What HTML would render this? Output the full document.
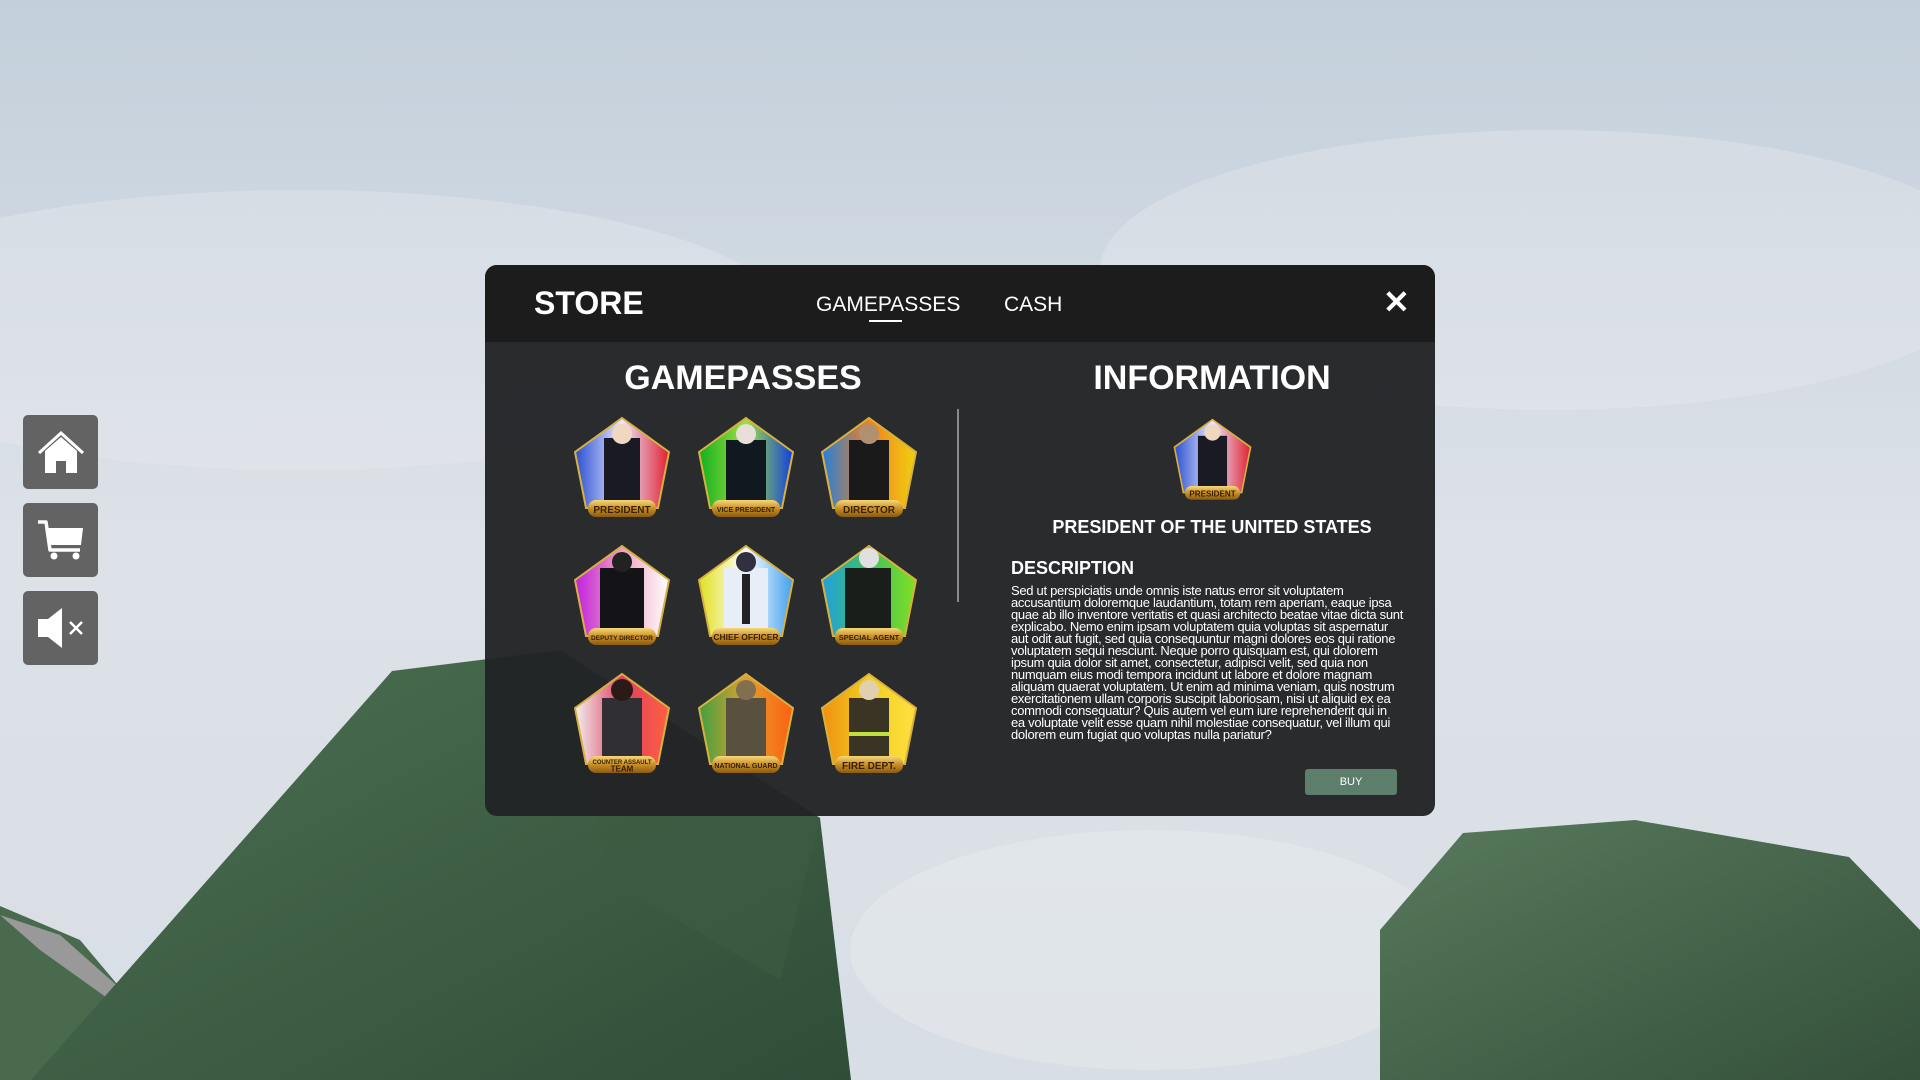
<!DOCTYPE html>
<html><head><meta charset="utf-8"><style>
*{margin:0;padding:0;box-sizing:border-box}
body{width:1920px;height:1080px;overflow:hidden;font-family:"Liberation Sans",sans-serif;position:relative;background:#c9d3dc}
#bg{position:absolute;left:0;top:0}
.side{position:absolute;left:23px;width:75px;height:74px;background:#636363;border-radius:5px;display:flex;align-items:center;justify-content:center}
.panel{position:absolute;left:485px;top:265px;width:950px;height:551px;border-radius:12px;overflow:hidden;background:rgba(34,35,37,.96)}
.hdr{height:77px;background:#1c1c1c;position:relative;color:#fff}
.abs{position:absolute;color:#fff;white-space:nowrap}
.desc{position:absolute;left:1011px;top:585px;width:392px;color:#fff;font-size:13px;line-height:12px;letter-spacing:-.3px}
</style></head><body>
<svg id="bg" width="1920" height="1080">
<defs>
<linearGradient id="sky" x1="0" y1="0" x2="0" y2="1"><stop offset="0" stop-color="#c3cfdb"/><stop offset=".5" stop-color="#dde2e8"/><stop offset="1" stop-color="#d8dee5"/></linearGradient>
<linearGradient id="g1" x1="0" y1="0" x2="1" y2="1"><stop offset="0" stop-color="#4d7152"/><stop offset="1" stop-color="#2f4d38"/></linearGradient>
<linearGradient id="g2" x1="0" y1="0" x2="1" y2="1"><stop offset="0" stop-color="#587a5c"/><stop offset="1" stop-color="#34503b"/></linearGradient>
</defs>
<rect width="1920" height="1080" fill="url(#sky)"/>
<ellipse cx="300" cy="330" rx="500" ry="140" fill="#eef0f2" opacity=".3"/>
<ellipse cx="1550" cy="270" rx="450" ry="140" fill="#eef0f2" opacity=".3"/>
<ellipse cx="1150" cy="950" rx="300" ry="120" fill="#eef0f2" opacity=".35"/>
<polygon points="0,906 80,940 122,990 98,1080 0,1080" fill="#4a6a4e"/>
<polygon points="0,915 60,935 122,990 110,1000 40,950" fill="#999"/>
<polygon points="31,1080 392,671 560,650 820,818 851,1080" fill="url(#g1)"/>
<polygon points="560,650 820,818 780,980 610,880" fill="#3c5c42" opacity=".6"/>
<polygon points="1380,1080 1380,930 1463,833 1635,820 1849,857 1920,930 1920,1080" fill="url(#g2)"/>
</svg>

<div class="side" style="top:415px"><svg width="50" height="46" viewBox="0 0 50 46"><path d="M3 24 L25 4 L47 24" fill="none" stroke="#fff" stroke-width="3"/><path d="M9 22 L25 8 L41 22 V44 H30 V32 H20 V44 H9Z" fill="#fff"/></svg></div>
<div class="side" style="top:503px"><svg width="50" height="44" viewBox="0 0 50 44"><path d="M2 4 H10 L14 32 H44" fill="none" stroke="#fff" stroke-width="3.5" stroke-linejoin="round"/><path d="M11 10 H47 L45 27 H14Z" fill="#fff"/><circle cx="18" cy="38" r="3.5" fill="#fff"/><circle cx="40" cy="38" r="3.5" fill="#fff"/></svg></div>
<div class="side" style="top:591px"><svg width="54" height="46" viewBox="0 0 54 46"><path d="M4 14 H14 L28 3 V43 L14 32 H4Z" fill="#fff"/><path d="M36 17 L48 29 M48 17 L36 29" stroke="#fff" stroke-width="2.5"/></svg></div>

<div class="panel"><div class="hdr">
<div class="abs" style="left:49px;top:20px;font-size:32px;font-weight:bold">STORE</div>
<div class="abs" style="left:331px;top:28px;font-size:21px">GAMEPASSES</div>
<div style="position:absolute;left:384px;top:55px;width:33px;height:2px;background:#fff"></div>
<div class="abs" style="left:519px;top:28px;font-size:21px">CASH</div>
<div class="abs" style="left:898px;top:18px;font-size:32px;font-weight:bold">✕</div>
</div></div>

<div class="abs" style="left:743px;top:359px;transform:translateX(-50%);font-size:34px;font-weight:bold">GAMEPASSES</div>
<div class="abs" style="left:1212px;top:359px;transform:translateX(-50%);font-size:34px;font-weight:bold">INFORMATION</div>
<div style="position:absolute;left:957px;top:409px;width:2px;height:193px;background:#8a8a8a"></div>

<svg width="1920" height="1080" style="position:absolute;left:0;top:0">
<defs>
<linearGradient id="b1" x1="0" x2="1"><stop offset="0" stop-color="#2a4fd0"/><stop offset=".5" stop-color="#e8e8ff"/><stop offset="1" stop-color="#e02030"/></linearGradient>
<linearGradient id="b2" x1="0" x2="1"><stop offset="0" stop-color="#10b020"/><stop offset=".5" stop-color="#a0e040"/><stop offset="1" stop-color="#1040e0"/></linearGradient>
<linearGradient id="b3" x1="0" x2="1"><stop offset="0" stop-color="#2080e0"/><stop offset=".5" stop-color="#f08020"/><stop offset="1" stop-color="#f0d010"/></linearGradient>
<linearGradient id="b4" x1="0" x2="1"><stop offset="0" stop-color="#c020e0"/><stop offset=".5" stop-color="#f0a0c0"/><stop offset="1" stop-color="#ffffff"/></linearGradient>
<linearGradient id="b5" x1="0" x2="1"><stop offset="0" stop-color="#e0e020"/><stop offset=".5" stop-color="#ffffff"/><stop offset="1" stop-color="#40a0f0"/></linearGradient>
<linearGradient id="b6" x1="0" x2="1"><stop offset="0" stop-color="#20a0e0"/><stop offset=".5" stop-color="#40c060"/><stop offset="1" stop-color="#80e020"/></linearGradient>
<linearGradient id="b7" x1="0" x2="1"><stop offset="0" stop-color="#f0f0f0"/><stop offset=".5" stop-color="#e04060"/><stop offset="1" stop-color="#ff6040"/></linearGradient>
<linearGradient id="b8" x1="0" x2="1"><stop offset="0" stop-color="#40a040"/><stop offset=".5" stop-color="#e0a030"/><stop offset="1" stop-color="#ff6010"/></linearGradient>
<linearGradient id="b9" x1="0" x2="1"><stop offset="0" stop-color="#f09010"/><stop offset=".5" stop-color="#f0d020"/><stop offset="1" stop-color="#ffe040"/></linearGradient>
<linearGradient id="gold" x1="0" y1="0" x2="0" y2="1"><stop offset="0" stop-color="#f8d878"/><stop offset=".5" stop-color="#c89028"/><stop offset="1" stop-color="#8a5a10"/></linearGradient>
<g id="pent"><path d="M50 2 L97 36 L86 92 L14 92 L3 36Z" stroke="#d8b040" stroke-width="2"/></g>
</defs>
<g font-family="Liberation Sans" font-weight="bold" text-anchor="middle">
<g transform="translate(572,416)"><use href="#pent" fill="url(#b1)"/><rect x="32" y="22" width="36" height="72" fill="#1a1a24"/><circle cx="50" cy="18" r="10" fill="#f0d8c0"/><rect x="16" y="84" width="68" height="17" rx="8" fill="url(#gold)"/><text x="50" y="97" font-size="10" fill="#3a2000">PRESIDENT</text></g>
<g transform="translate(696,416)"><use href="#pent" fill="url(#b2)"/><rect x="30" y="24" width="40" height="70" fill="#101820"/><circle cx="50" cy="18" r="10" fill="#e8e0d8"/><rect x="16" y="84" width="68" height="17" rx="8" fill="url(#gold)"/><text x="50" y="96" font-size="7" fill="#3a2000">VICE PRESIDENT</text></g>
<g transform="translate(819,416)"><use href="#pent" fill="url(#b3)"/><rect x="30" y="24" width="40" height="70" fill="#1a1a1a"/><circle cx="50" cy="18" r="10" fill="#b09070"/><rect x="16" y="84" width="68" height="17" rx="8" fill="url(#gold)"/><text x="50" y="97" font-size="10" fill="#3a2000">DIRECTOR</text></g>
<g transform="translate(572,544)"><use href="#pent" fill="url(#b4)"/><rect x="28" y="24" width="44" height="70" fill="#141418"/><circle cx="50" cy="18" r="10" fill="#222"/><rect x="16" y="84" width="68" height="17" rx="8" fill="url(#gold)"/><text x="50" y="96" font-size="6.5" fill="#3a2000">DEPUTY DIRECTOR</text></g>
<g transform="translate(696,544)"><use href="#pent" fill="url(#b5)"/><rect x="28" y="24" width="44" height="70" fill="#e8eef8"/><rect x="46" y="30" width="8" height="50" fill="#222"/><circle cx="50" cy="18" r="10" fill="#303040"/><rect x="16" y="84" width="68" height="17" rx="8" fill="url(#gold)"/><text x="50" y="96" font-size="8.5" fill="#3a2000">CHIEF OFFICER</text></g>
<g transform="translate(819,544)"><use href="#pent" fill="url(#b6)"/><rect x="26" y="24" width="46" height="70" fill="#1a1e1a"/><circle cx="50" cy="14" r="10" fill="#e0e0e0"/><rect x="16" y="84" width="68" height="17" rx="8" fill="url(#gold)"/><text x="50" y="96" font-size="7.5" fill="#3a2000">SPECIAL AGENT</text></g>
<g transform="translate(572,672)"><use href="#pent" fill="url(#b7)"/><rect x="30" y="26" width="40" height="68" fill="#303034"/><circle cx="50" cy="18" r="11" fill="#2a1a18"/><rect x="16" y="84" width="68" height="17" rx="8" fill="url(#gold)"/><text x="50" y="92" font-size="6" fill="#3a2000">COUNTER ASSAULT</text><text x="50" y="99.5" font-size="8" fill="#3a2000">TEAM</text></g>
<g transform="translate(696,672)"><use href="#pent" fill="url(#b8)"/><rect x="30" y="26" width="40" height="68" fill="#5a5040"/><circle cx="50" cy="18" r="10" fill="#807050"/><rect x="16" y="84" width="68" height="17" rx="8" fill="url(#gold)"/><text x="50" y="96" font-size="7" fill="#3a2000">NATIONAL GUARD</text></g>
<g transform="translate(819,672)"><use href="#pent" fill="url(#b9)"/><rect x="30" y="26" width="40" height="68" fill="#3a3424"/><rect x="30" y="60" width="40" height="4" fill="#c0e040"/><circle cx="50" cy="18" r="10" fill="#e0d0b0"/><rect x="16" y="84" width="68" height="17" rx="8" fill="url(#gold)"/><text x="50" y="97" font-size="10" fill="#3a2000">FIRE DEPT.</text></g>
<g transform="translate(1172,418) scale(0.81)"><use href="#pent" fill="url(#b1)"/><rect x="32" y="22" width="36" height="72" fill="#1a1a24"/><circle cx="50" cy="18" r="10" fill="#f0d8c0"/><rect x="16" y="84" width="68" height="17" rx="8" fill="url(#gold)"/><text x="50" y="97" font-size="10" fill="#3a2000">PRESIDENT</text></g>
</g>
</svg>

<div class="abs" style="left:1212px;top:517px;transform:translateX(-50%);font-size:18px;font-weight:bold">PRESIDENT OF THE UNITED STATES</div>
<div class="abs" style="left:1011px;top:558px;font-size:18px;font-weight:bold">DESCRIPTION</div>
<div class="desc">Sed ut perspiciatis unde omnis iste natus error sit voluptatem accusantium doloremque laudantium, totam rem aperiam, eaque ipsa quae ab illo inventore veritatis et quasi architecto beatae vitae dicta sunt explicabo. Nemo enim ipsam voluptatem quia voluptas sit aspernatur aut odit aut fugit, sed quia consequuntur magni dolores eos qui ratione voluptatem sequi nesciunt. Neque porro quisquam est, qui dolorem ipsum quia dolor sit amet, consectetur, adipisci velit, sed quia non numquam eius modi tempora incidunt ut labore et dolore magnam aliquam quaerat voluptatem. Ut enim ad minima veniam, quis nostrum exercitationem ullam corporis suscipit laboriosam, nisi ut aliquid ex ea commodi consequatur? Quis autem vel eum iure reprehenderit qui in ea voluptate velit esse quam nihil molestiae consequatur, vel illum qui dolorem eum fugiat quo voluptas nulla pariatur?</div>
<div style="position:absolute;left:1305px;top:769px;width:92px;height:26px;background:#5e7e6c;border-radius:3px;color:#fff;font-size:11px;text-align:center;line-height:26px">BUY</div>
</body></html>
